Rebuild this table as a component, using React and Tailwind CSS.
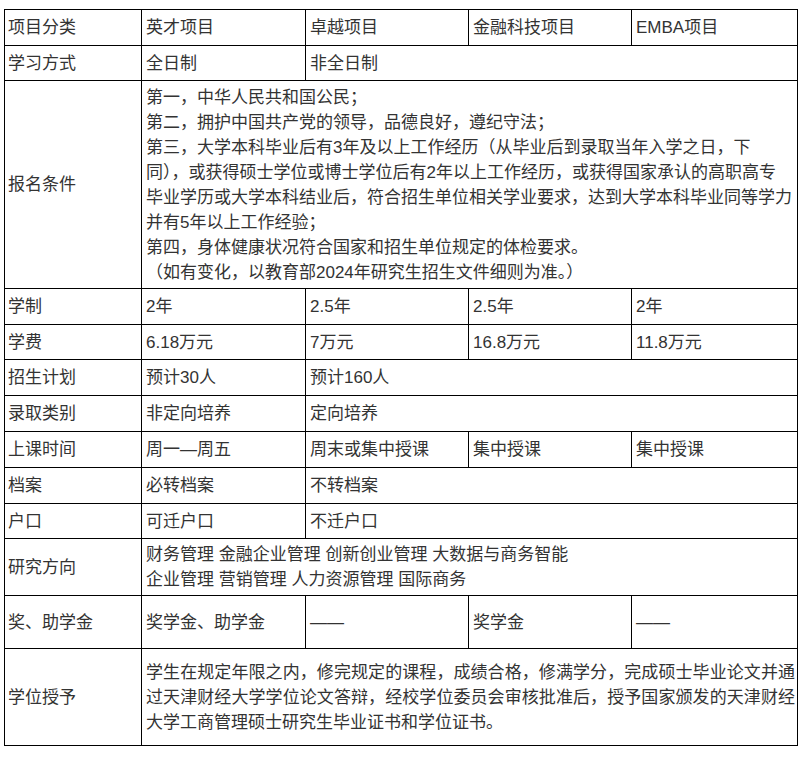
import React from "react";

const cell = "border border-black pl-1 pr-1 align-middle";
const label = "border border-black pl-[3px] pr-1 align-middle";

const simpleRows = [
  { h: "h-[36px]", name: "学制", cells: [["2年"], ["2.5年"], ["2.5年"], ["2年"]] },
  { h: "h-[35px]", name: "学费", cells: [["6.18万元"], ["7万元"], ["16.8万元"], ["11.8万元"]] },
  { h: "h-[36px]", name: "招生计划", cells: [["预计30人"], ["预计160人", 3]] },
  { h: "h-[36px]", name: "录取类别", cells: [["非定向培养"], ["定向培养", 3]] },
  { h: "h-[36px]", name: "上课时间", cells: [["周一—周五"], ["周末或集中授课"], ["集中授课"], ["集中授课"]] },
  { h: "h-[36px]", name: "档案", cells: [["必转档案"], ["不转档案", 3]] },
  { h: "h-[35px]", name: "户口", cells: [["可迁户口"], ["不迁户口", 3]] },
];

const requirements = [
  "第一，中华人民共和国公民；",
  "第二，拥护中国共产党的领导，品德良好，遵纪守法；",
  "第三，大学本科毕业后有3年及以上工作经历（从毕业后到录取当年入学之日，下",
  "同），或获得硕士学位或博士学位后有2年以上工作经历，或获得国家承认的高职高专",
  "毕业学历或大学本科结业后，符合招生单位相关学业要求，达到大学本科毕业同等学力",
  "并有5年以上工作经验；",
  "第四，身体健康状况符合国家和招生单位规定的体检要求。",
  "（如有变化，以教育部2024年研究生招生文件细则为准。）",
];

export default function App() {
  return (
    <div className="min-h-[757px] bg-white pt-[9px] pl-[4px] font-['Liberation_Sans','Noto_Sans_CJK_SC',sans-serif] text-[17px] leading-[25px] text-[#333]">
      <table className="w-[793px] table-fixed border-collapse">
        <colgroup>
          <col className="w-[137px]" />
          <col className="w-[164px]" />
          <col className="w-[163px]" />
          <col className="w-[163px]" />
          <col className="w-[166px]" />
        </colgroup>
        <tbody>
          <tr className="h-[36px]">
            <td className={label}>项目分类</td>
            <td className={cell}>英才项目</td>
            <td className={cell}>卓越项目</td>
            <td className={cell}>金融科技项目</td>
            <td className={cell}>EMBA项目</td>
          </tr>
          <tr className="h-[35px]">
            <td className={label}>学习方式</td>
            <td className={cell}>全日制</td>
            <td className={cell} colSpan={3}>
              非全日制
            </td>
          </tr>
          <tr className="h-[208px]">
            <td className={label}>报名条件</td>
            <td className={cell} colSpan={4}>
              {requirements.map((line) => (
                <div key={line} className="whitespace-nowrap">
                  {line}
                </div>
              ))}
            </td>
          </tr>
          {simpleRows.map((row) => (
            <tr key={row.name} className={row.h}>
              <td className={label}>{row.name}</td>
              {row.cells.map(([text, span], i) => (
                <td key={i} className={cell} colSpan={span || 1}>
                  {text}
                </td>
              ))}
            </tr>
          ))}
          <tr className="h-[57px]">
            <td className={label}>研究方向</td>
            <td className={cell} colSpan={4}>
              <div>财务管理 金融企业管理 创新创业管理 大数据与商务智能</div>
              <div>企业管理 营销管理 人力资源管理 国际商务</div>
            </td>
          </tr>
          <tr className="h-[53px]">
            <td className={label}>奖、助学金</td>
            <td className={cell}>奖学金、助学金</td>
            <td className={cell}>——</td>
            <td className={cell}>奖学金</td>
            <td className={cell}>——</td>
          </tr>
          <tr className="h-[97px]">
            <td className={label}>学位授予</td>
            <td className="border border-black pl-1 pr-[2px] align-middle" colSpan={4}>
              <div className="whitespace-nowrap text-justify [text-align-last:justify]">
                学生在规定年限之内，修完规定的课程，成绩合格，修满学分，完成硕士毕业论文并通
              </div>
              <div className="whitespace-nowrap text-justify [text-align-last:justify]">
                过天津财经大学学位论文答辩，经校学位委员会审核批准后，授予国家颁发的天津财经
              </div>
              <div>大学工商管理硕士研究生毕业证书和学位证书。</div>
            </td>
          </tr>
        </tbody>
      </table>
    </div>
  );
}
